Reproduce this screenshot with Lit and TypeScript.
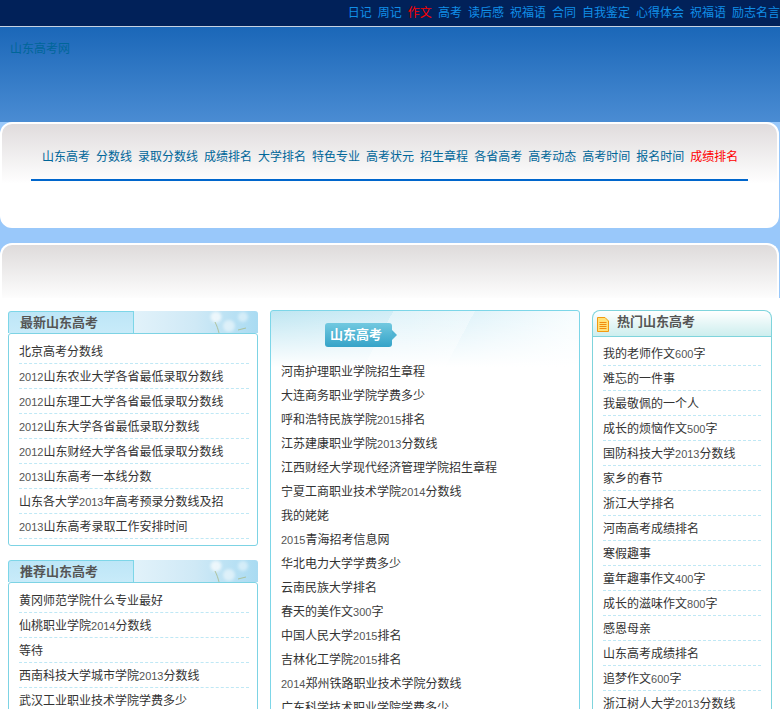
import { LitElement, html, css, svg } from "lit";
import { customElement } from "lit/decorators.js";

const TOP = ["日记", "周记", "作文", "高考", "读后感", "祝福语", "合同", "自我鉴定", "心得体会", "祝福语", "励志名言"];
const NAV = ["山东高考", "分数线", "录取分数线", "成绩排名", "大学排名", "特色专业", "高考状元", "招生章程", "各省高考", "高考动态", "高考时间", "报名时间", "成绩排名"];
const NEWEST = ["北京高考分数线", "2012山东农业大学各省最低录取分数线", "2012山东理工大学各省最低录取分数线", "2012山东大学各省最低录取分数线", "2012山东财经大学各省最低录取分数线", "2013山东高考一本线分数", "山东各大学2013年高考预录分数线及招", "2013山东高考录取工作安排时间"];
const RECOMMEND = ["黄冈师范学院什么专业最好", "仙桃职业学院2014分数线", "等待", "西南科技大学城市学院2013分数线", "武汉工业职业技术学院学费多少"];
const MID = ["河南护理职业学院招生章程", "大连商务职业学院学费多少", "呼和浩特民族学院2015排名", "江苏建康职业学院2013分数线", "江西财经大学现代经济管理学院招生章程", "宁夏工商职业技术学院2014分数线", "我的姥姥", "2015青海招考信息网", "华北电力大学学费多少", "云南民族大学排名", "春天的美作文300字", "中国人民大学2015排名", "吉林化工学院2015排名", "2014郑州铁路职业技术学院分数线", "广东科学技术职业学院学费多少"];
const HOT = ["我的老师作文600字", "难忘的一件事", "我最敬佩的一个人", "成长的烦恼作文500字", "国防科技大学2013分数线", "家乡的春节", "浙江大学排名", "河南高考成绩排名", "寒假趣事", "童年趣事作文400字", "成长的滋味作文800字", "感恩母亲", "山东高考成绩排名", "追梦作文600字", "浙江树人大学2013分数线"];

const withDigits = (t: string) =>
  t.split(/(\d+)/).map((p, i) => (i % 2 ? html`<span class="num">${p}</span>` : p));

const dandelion = svg`
  <svg class="flower" width="124" height="22" viewBox="0 0 124 22">
    <g fill="#fff">
      <circle class="puff" cx="82" cy="6" r="5.500" opacity=".7"/>
      <circle class="puff" cx="109" cy="6" r="5" opacity=".45"/>
      <circle class="puff" cx="95" cy="15" r="6" opacity=".5"/>
    </g>
    <path d="M81 11 C83 15 84 18 85 22 M104 19 L112 17" stroke="#a8b98a" fill="none" opacity=".8"/>
  </svg>`;

const docIcon = svg`
  <svg class="doc" width="12" height="15" viewBox="0 0 12 15">
    <path d="M.5.5h7.500l3.500 3.500v10.500H.5z" fill="#ffe27a" stroke="#f39a12"/>
    <path d="M2.500 5.500h7M2.500 7.500h7M2.500 9.500h7M2.500 11.500h7" stroke="#f08a10"/>
  </svg>`;

@customElement("app-root")
export class AppRoot extends LitElement {
  static styles = css`
    :host {
      display: block;
      width: 780px;
      height: 709px;
      overflow: hidden;
      background: #fff;
      font: 12px/24px "Liberation Sans", "Noto Sans CJK SC", sans-serif;
      color: #333;
    }
    a { color: inherit; text-decoration: none; white-space: nowrap; }
    .num { font-size: 11px; color: #555; }
    .top {
      height: 26px;
      background: #012159;
      border-bottom: 1px solid #c6d2e2;
      display: flex;
      justify-content: flex-end;
      gap: 6px;
      line-height: 27px;
      color: #118fe8;
    }
    .top .hot, .nav .hot { color: #f00; }
    .sky {
      height: 271px;
      background: linear-gradient(#1b67b8, #4a8cd3 95px, #99c8fa 95px);
    }
    .logo { height: 95px; padding: 10px 10px 0; box-sizing: border-box; color: #006699; }
    .panel {
      margin-right: 1px;
      box-sizing: border-box;
      border: 2px solid #fff;
    }
    .panel.one {
      height: 106px;
      border-radius: 12px;
      background: linear-gradient(#e0dcdd, #fff 60px);
      padding: 21px 29px 0;
    }
    .panel.two {
      height: 55px;
      margin-top: 15px;
      border-radius: 12px 12px 0 0;
      border-bottom: 0;
      background: linear-gradient(#dedbdb, #fdfdfd);
    }
    .nav {
      display: flex;
      gap: 6px;
      padding: 0 0 10px 11px;
      border-bottom: 2px solid #0066cc;
      color: #006699;
    }
    .cols { display: flex; align-items: flex-start; padding: 12px 0 0 8px; gap: 12px; }
    .left { width: 250px; margin-top: 1px; display: flex; flex-direction: column; gap: 14px; }
    .lhead {
      height: 22px;
      box-sizing: border-box;
      position: relative;
      display: flex;
      border-radius: 3px 3px 0 0;
      background: linear-gradient(90deg, #d6edf8, #e6f4fb 45%, #cfe9f6 75%, #a9dbf2);
      overflow: hidden;
    }
    .tab {
      width: 126px;
      box-sizing: border-box;
      border: 1px solid #7dd6e8;
      border-bottom: 0;
      border-radius: 3px 0 0 0;
      padding-left: 11px;
      background: linear-gradient(#bde6f7, #c8ebf9);
      font-size: 13px;
      font-weight: bold;
      line-height: 21px;
      color: #555;
    }
    .flower { position: absolute; right: 0; top: 0; }
    .puff { filter: blur(1.500px); }
    .lbody {
      border: 1px solid #7dd3e4;
      border-radius: 3px;
      padding: 5px 8px 6px 10px;
    }
    .row {
      display: block;
      height: 25px;
      box-sizing: border-box;
      line-height: 26px;
      border-bottom: 1px dashed #bfe8f5;
    }
    .mid {
      width: 310px;
      box-sizing: border-box;
      border: 1px solid #7dd6e8;
      border-radius: 3px;
      height: 420px;
      padding-left: 10px;
      background:
        linear-gradient(rgba(255,255,255,0), #fff 56px) 0 0 / 100% 60px no-repeat,
        linear-gradient(118deg, transparent 36%, rgba(255,255,255,.35) 36% 60%, transparent 60%) 0 0 / 100% 60px no-repeat,
        linear-gradient(100deg, #bfe6f2, #d3eef7 45%, #f6fcfe 95%) 0 0 / 100% 60px no-repeat;
    }
    .tag {
      position: relative;
      width: 62px;
      height: 24px;
      margin: 12px 0 12px 44px;
      padding-left: 5px;
      border-radius: 3px;
      background: linear-gradient(#72c9e0, #35a3c8);
      color: #fff;
      font-size: 13px;
      font-weight: bold;
    }
    .tag::after {
      content: "";
      position: absolute;
      left: 100%;
      top: 7px;
      border: 5px solid transparent;
      border-left-color: #50b4d3;
      border-right-width: 0;
    }
    .mrow { height: 24px; display: block; line-height: 26px; }
    .right { width: 180px; }
    .rhead {
      height: 26px;
      box-sizing: border-box;
      border: 1px solid #7fd4dc;
      border-bottom: 0;
      border-radius: 8px 8px 0 0;
      background: linear-gradient(#fff, #cdeeee);
      display: flex;
      align-items: flex-start;
      gap: 8px;
      padding: 6px 0 0 4px;
      font-size: 13px;
      font-weight: bold;
      color: #555;
    }
    .doc { flex: none; }
    .rtitle { line-height: 9px; }
    .rbody {
      border: 1px solid #7fd4dc;
      padding: 4px 10px 6px 10px;
      height: 400px;
    }
  `;

  render() {
    return html`
      <div class="top">
        ${TOP.map((t) => html`<a class=${t === "作文" ? "hot" : ""}>${t}</a>`)}
      </div>
      <div class="sky">
        <div class="logo"><a>山东高考网</a></div>
        <div class="panel one">
          <div class="nav">
            ${NAV.map((t, i) => html`<a class=${i === NAV.length - 1 ? "hot" : ""}>${t}</a>`)}
          </div>
        </div>
        <div class="panel two"></div>
      </div>
      <div class="cols">
        <div class="left">
          ${[["最新山东高考", NEWEST], ["推荐山东高考", RECOMMEND]].map(
            ([title, items]) => html`
              <section>
                <div class="lhead"><div class="tab">${title}</div>${dandelion}</div>
                <div class="lbody">
                  ${(items as string[]).map((t) => html`<a class="row">${withDigits(t)}</a>`)}
                </div>
              </section>
            `
          )}
        </div>
        <div class="mid">
          <div class="tag">山东高考</div>
          ${MID.map((t) => html`<a class="mrow">${withDigits(t)}</a>`)}
        </div>
        <div class="right">
          <div class="rhead">${docIcon}<span class="rtitle">热门山东高考</span></div>
          <div class="rbody">
            ${HOT.map((t) => html`<a class="row">${withDigits(t)}</a>`)}
          </div>
        </div>
      </div>
    `;
  }
}
